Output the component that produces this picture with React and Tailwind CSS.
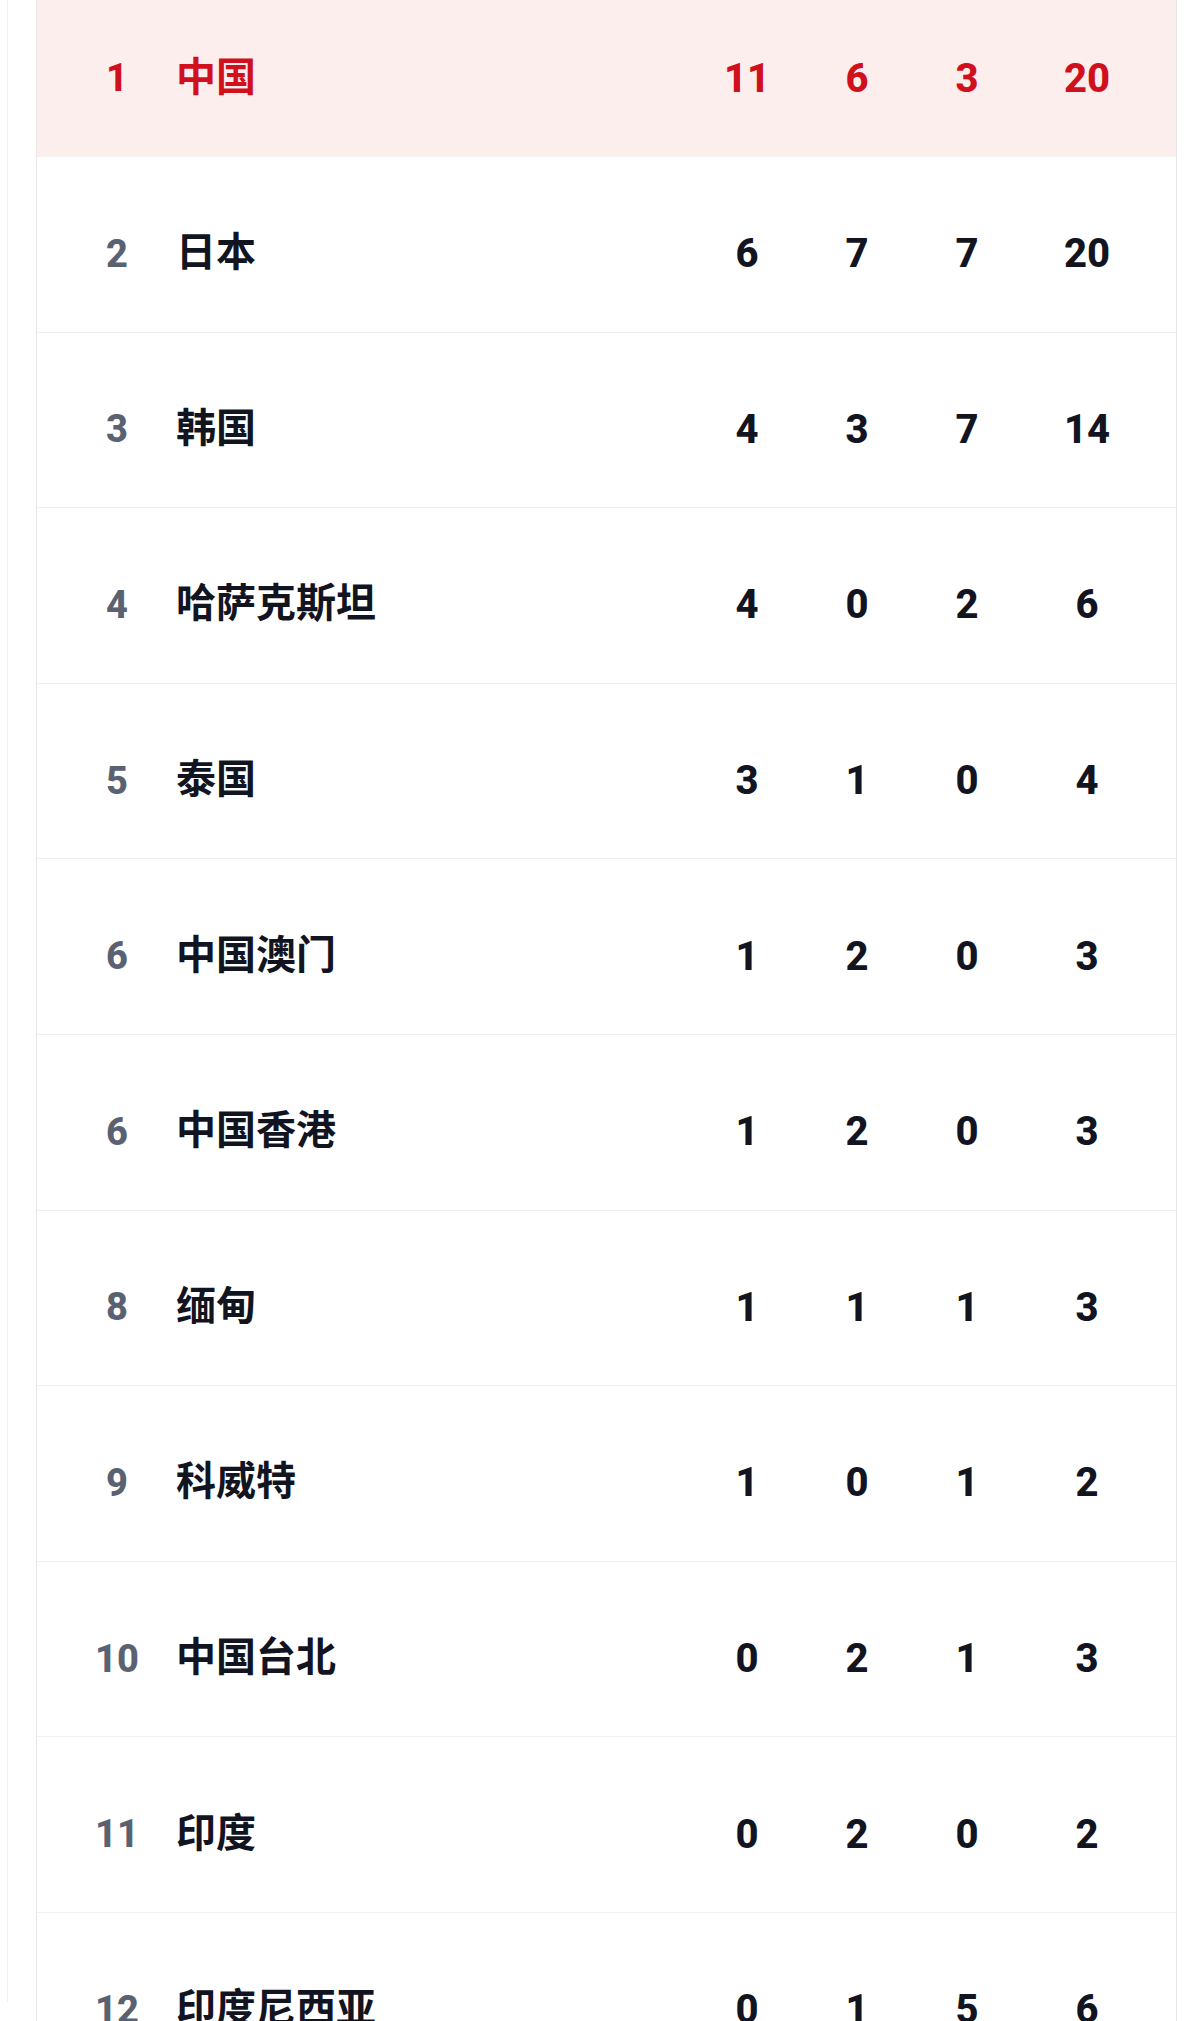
const rows = [
  { rank: 1, name: '中国', gold: 11, silver: 6, bronze: 3, total: 20 },
  { rank: 2, name: '日本', gold: 6, silver: 7, bronze: 7, total: 20 },
  { rank: 3, name: '韩国', gold: 4, silver: 3, bronze: 7, total: 14 },
  { rank: 4, name: '哈萨克斯坦', gold: 4, silver: 0, bronze: 2, total: 6 },
  { rank: 5, name: '泰国', gold: 3, silver: 1, bronze: 0, total: 4 },
  { rank: 6, name: '中国澳门', gold: 1, silver: 2, bronze: 0, total: 3 },
  { rank: 6, name: '中国香港', gold: 1, silver: 2, bronze: 0, total: 3 },
  { rank: 8, name: '缅甸', gold: 1, silver: 1, bronze: 1, total: 3 },
  { rank: 9, name: '科威特', gold: 1, silver: 0, bronze: 1, total: 2 },
  { rank: 10, name: '中国台北', gold: 0, silver: 2, bronze: 1, total: 3 },
  { rank: 11, name: '印度', gold: 0, silver: 2, bronze: 0, total: 2 },
  { rank: 12, name: '印度尼西亚', gold: 0, silver: 1, bronze: 5, total: 6 },
]

const num = "font-['Roboto','Inter',sans-serif]"
const cjk = "font-['Noto_Sans_CJK_SC',sans-serif]"

function MedalRow({ row }) {
  const top = row.rank === 1
  const text = top ? 'text-[#d0101c]' : 'text-[#12141f]'
  const cell = `pt-[10px] text-center text-[40px] font-extrabold ${num} ${text}`
  return (
    <div
      className={`flex h-[175.6px] items-center border-b border-[#f0f0f0] pl-[40px] pr-[24px] pt-[10px] ${
        top ? 'bg-[#fdeeee]' : 'bg-white'
      }`}
    >
      <div
        className={`w-[80px] pt-[10px] text-center text-[38px] font-extrabold ${num} ${
          top ? 'text-[#d0101c]' : 'text-[#5a6272]'
        }`}
      >
        {row.rank}
      </div>
      <div className={`ml-[19px] flex-1 text-[40px] font-bold ${cjk} ${text}`}>{row.name}</div>
      <div className={`w-[110px] ${cell}`}>{row.gold}</div>
      <div className={`w-[110px] ${cell}`}>{row.silver}</div>
      <div className={`w-[110px] ${cell}`}>{row.bronze}</div>
      <div className={`w-[130px] ${cell}`}>{row.total}</div>
    </div>
  )
}

export default function App() {
  return (
    <div className="h-[2021px] overflow-hidden bg-white pl-[7px]">
      <div className="h-full border-l border-[#f0f0f0] pl-[28px] pr-[23px]">
        <div className="-mt-[18.6px] border-x border-[#e6e6e6]">
          {rows.map(r => (
            <MedalRow key={r.name} row={r} />
          ))}
        </div>
      </div>
    </div>
  )
}
